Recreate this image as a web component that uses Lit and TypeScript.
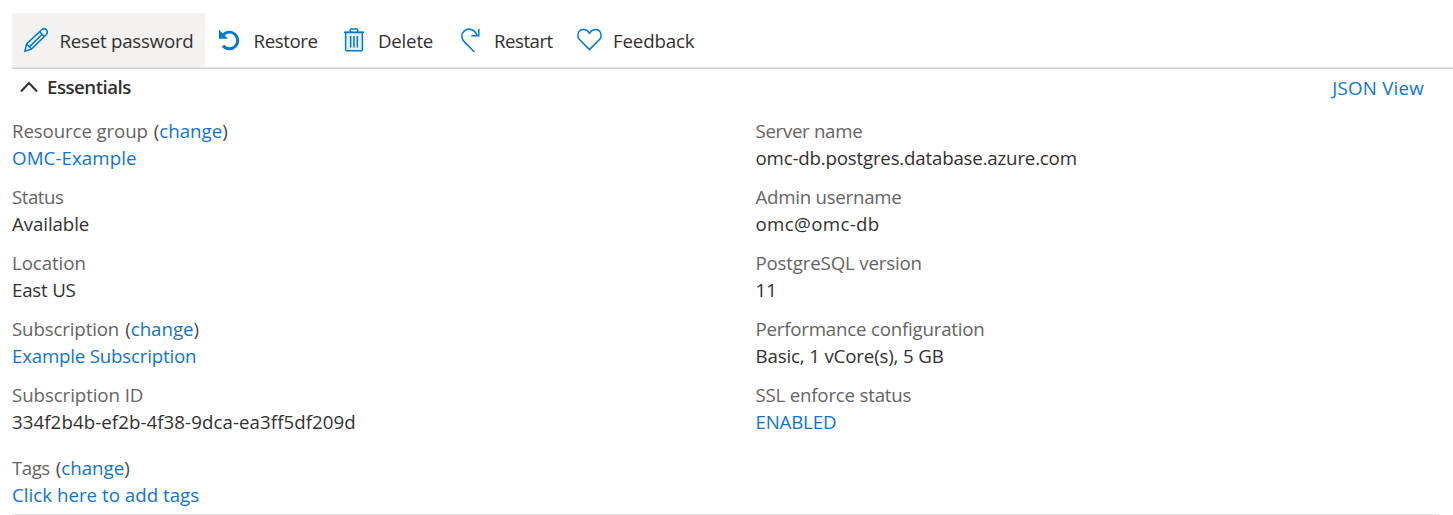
import { LitElement, html, css, svg } from "lit";
import { customElement } from "lit/decorators.js";

interface Run { text: string; track: number }
interface Field { label: Run; change?: boolean; value: Run; link?: boolean }
interface Command { run: Run; icon: unknown; cls: string; active?: boolean }

const t = (text: string, track: number): Run => ({ text, track });

const left: Field[] = [
  { label: t("Resource group", -0.12), change: true, value: t("OMC-Example", 0.09), link: true },
  { label: t("Status", -0.5), value: t("Available", -0.08) },
  { label: t("Location", -0.08), value: t("East US", -0.2) },
  { label: t("Subscription", -0.14), change: true, value: t("Example Subscription", -0.2), link: true },
  { label: t("Subscription ID", -0.08), value: t("334f2b4b-ef2b-4f38-9dca-ea3ff5df209d", 0.07) },
];

const right: Field[] = [
  { label: t("Server name", -0.32), value: t("omc-db.postgres.database.azure.com", -0.19) },
  { label: t("Admin username", -0.26), value: t("omc@omc-db", 0.35) },
  { label: t("PostgreSQL version", -0.18), value: t("11", 0.11) },
  { label: t("Performance configuration", -0.21), value: t("Basic, 1 vCore(s), 5 GB", -0.15) },
  { label: t("SSL enforce status", -0.21), value: t("ENABLED", -0.18), link: true },
];

const tags: Field = { label: t("Tags", -0.5), change: true, value: t("Click here to add tags", 0.02), link: true };

const pencil = svg`<path d="M.9 23.1 2.6 16 17.7 1.8a3.3 3.3 0 0 1 4.7 4.7L7.5 21.1z"/><path d="M2.6 16l4.9 5.1M15.6 3.8l4.8 4.8M5.7 18.6 17.6 6.7"/>`;
const undo = svg`<path class="heavy" d="M4.2 8.3A8.3 8.3 0 1 1 5 17.8"/><path class="solid" d="M1 1.8v9h9z"/>`;
const trash = svg`<path fill="#e4f1fb" d="M3.6 4.6h16.8v17.2a1 1 0 0 1-1 1H4.6a1 1 0 0 1-1-1z"/><path d="M2 4.2h20M8.2 4V2a1 1 0 0 1 1-1h5.6a1 1 0 0 1 1 1v2M8.7 8v11.5M12 8v11.5M15.3 8v11.5"/>`;
const redo = svg`<path d="M14.4 24 4.8 14.4C.6 10.2 1 5.5 4.4 2.8c4-3.3 9.8-1.7 12.6 4M18.8 1v6.8h-7.5"/>`;
const heart = svg`<path d="M12.5 21.6 2.7 11.8C-.7 8.3 1 1.6 6.6 1.6c2.7 0 4.5 1.6 5.9 3.6 1.4-2 3.2-3.6 5.9-3.6 5.6 0 7.3 6.7 3.9 10.2z"/>`;

const commands: Command[] = [
  { run: t("Reset password", -0.24), icon: pencil, cls: "reset", active: true },
  { run: t("Restore", -0.4), icon: undo, cls: "restore" },
  { run: t("Delete", -0.22), icon: trash, cls: "delete" },
  { run: t("Restart", -0.5), icon: redo, cls: "restart" },
  { run: t("Feedback", -0.14), icon: heart, cls: "feedback" },
];

const run = (r: Run) => html`<span style="letter-spacing:${r.track}px">${r.text}</span>`;

@customElement("app-root")
export class AppRoot extends LitElement {
  static styles = css`
    :host { display: block; box-sizing: border-box; height: 515px; padding: 13px 0 0 12px; overflow: hidden; background: #fff; color: #323130; font: 18.7px/27px "Open Sans", "Noto Sans", sans-serif; white-space: nowrap; }
    svg { display: block; flex: none; fill: none; stroke: #0078d4; stroke-width: 1.5; overflow: visible; }
    .heavy { stroke-width: 2.9; }
    .solid { fill: #0078d4; stroke: none; }
    .bar { display: flex; height: 54px; border-bottom: 1px solid #e2e2e2; box-shadow: 0 1px 0 #cfcfcf; margin-bottom: 1px; }
    .cmd { display: flex; align-items: center; box-sizing: border-box; padding-top: 1px; }
    .active { background: #f3f2f1; }
    .reset { width: 193px; padding-left: 12px; gap: 10.5px; }
    .restore { width: 127px; padding-left: 13px; gap: 10.5px; }
    .delete { width: 116px; padding-left: 10px; gap: 11px; }
    .restart { width: 117px; padding-left: 12px; gap: 9px; }
    .feedback { padding-left: 12px; gap: 11px; }
    .head { display: flex; align-items: center; height: 36px; padding: 0 29px 0 8px; }
    .head svg { stroke: #323130; stroke-width: 2; }
    .title { font-weight: 600; margin-left: 9px; flex: 1; padding-bottom: 2px; }
    a { color: #0f74d1; text-decoration: none; }
    .grid { display: grid; grid-template-columns: 743.5px 1fr; padding-top: 12px; }
    .col { display: flex; flex-direction: column; gap: 12px; }
    .label { color: #666463; }
    .change { color: #484644; margin-left: 6px; }
    .tags { margin-top: 19px; }
    .rule { height: 1px; margin: 6px 14px 0 0; background: #e3e3e3; }
  `;

  private field(f: Field) {
    return html`<div>
      <div class="label">${run(f.label)}${f.change ? html`<span class="change">(<a>change</a>)</span>` : ""}</div>
      <div>${f.link ? html`<a>${run(f.value)}</a>` : run(f.value)}</div>
    </div>`;
  }

  render() {
    return html`
      <div class="bar">${commands.map((c) => html`<div class="cmd ${c.cls} ${c.active ? "active" : ""}"><svg width="25" height="25" viewBox="0 0 25 25">${c.icon}</svg>${run(c.run)}</div>`)}</div>
      <div class="head">
        <svg width="18" height="12" viewBox="0 0 18 12"><path d="M1 10.5 9 2l8 8.5"/></svg>
        <span class="title">${run(t("Essentials", -0.52))}</span>
        <a>${run(t("JSON View", 0.25))}</a>
      </div>
      <div class="grid">
        <div class="col">${left.map((f) => this.field(f))}</div>
        <div class="col">${right.map((f) => this.field(f))}</div>
      </div>
      <div class="tags">${this.field(tags)}</div>
      <div class="rule"></div>
    `;
  }
}
